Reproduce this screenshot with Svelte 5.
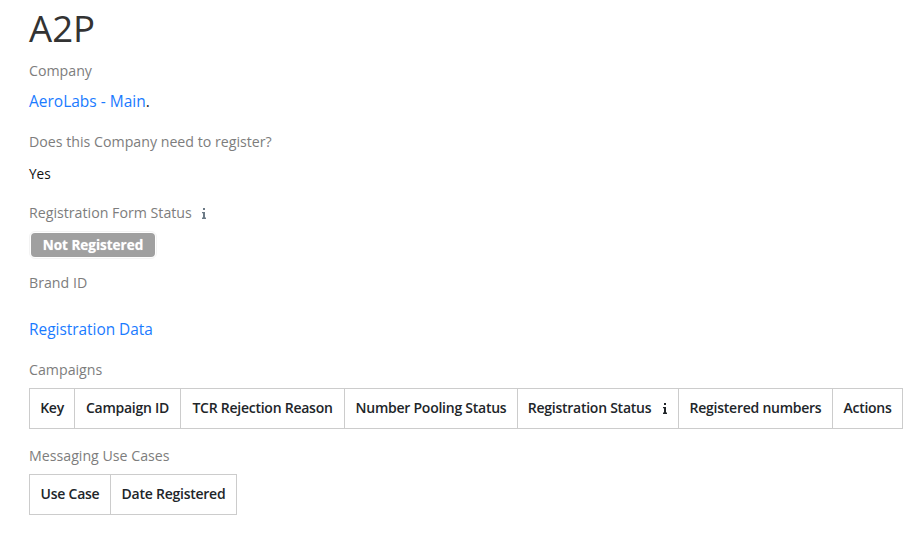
<script>
  const campaignCols = [
    { label: 'Key', width: 45 },
    { label: 'Campaign ID', width: 106 },
    { label: 'TCR Rejection Reason', width: 164 },
    { label: 'Number Pooling Status', width: 173 },
    { label: 'Registration Status', width: 161, info: true },
    { label: 'Registered numbers', width: 154 },
    { label: 'Actions', width: 70 }
  ];
  const useCaseCols = [
    { label: 'Use Case', width: 81 },
    { label: 'Date Registered', width: 126 }
  ];
  const tableWidth = (cols) => cols.reduce((sum, col) => sum + col.width, 0) + 1;
</script>

{#snippet infoIcon()}
  <svg class="info" width="6" height="11" viewBox="0 0 6 11" aria-hidden="true">
    <rect x="2" y="0" width="2" height="2" />
    <path d="M1 4h3v5.6h1V11H1V9.6h1V5.2H1z" />
  </svg>
{/snippet}

{#snippet headerTable(cols)}
  <table style="width: {tableWidth(cols)}px">
    <thead>
      <tr>
        {#each cols as col}
          <th style="width: {col.width}px">
            {col.label}{#if col.info}{@render infoIcon()}{/if}
          </th>
        {/each}
      </tr>
    </thead>
  </table>
{/snippet}

<main class="page">
  <h1>A2P</h1>

  <div class="label l-company">Company</div>
  <div class="value l-main"><a href="#aero">AeroLabs - Main</a>.</div>

  <div class="label l-need">Does this Company need to register?</div>
  <div class="value l-yes">Yes</div>

  <div class="label l-form">Registration Form Status{@render infoIcon()}</div>
  <div class="badge-wrap"><span class="badge-ring"><span class="badge">Not Registered</span></span></div>

  <div class="label l-brand">Brand ID</div>
  <div class="value l-data"><a href="#data">Registration Data</a></div>

  <div class="label l-campaigns">Campaigns</div>
  {@render headerTable(campaignCols)}

  <div class="label l-use">Messaging Use Cases</div>
  {@render headerTable(useCaseCols)}
</main>

<style>
  :global(body) {
    background: #fff;
    color: #212529;
    font-family: "Open Sans", "Noto Sans", sans-serif;
    font-size: 14px;
  }
  .page {
    padding: 0 10px 0 29px;
    height: 535px;
    box-sizing: border-box;
    overflow: hidden;
  }
  h1 {
    margin: 0;
    padding-top: 6px;
    font-size: 36.6px;
    font-weight: 400;
    line-height: 44px;
    color: #333;
  }
  .label { color: #7d7d7d; line-height: 20px; font-size: 14.2px; }
  .value { line-height: 20px; color: #212529; }
  a { color: #1a7bff; text-decoration: none; }
  .l-company { margin-top: 11px; }
  .l-main { margin-top: 10px; font-size: 15.5px; }
  .l-need { margin-top: 21px; }
  .l-yes { margin-top: 12px; color: #111; font-size: 13.6px; }
  .l-form { margin-top: 19px; }
  .badge-wrap {
    margin-top: 8px;
    display: flex;
  }
  .badge-ring {
    display: inline-flex;
    border: 1px solid #f3f3f3;
    border-radius: 6px;
    padding: 1px;
  }
  .badge {
    width: 124px;
    height: 24px;
    border-radius: 4px;
    background: #a0a0a0;
    color: #fff;
    font-size: 13.5px;
    font-weight: 700;
    line-height: 24px;
    text-align: center;
    text-shadow: 0 0 1px rgba(255, 255, 255, 0.6);
  }
  .l-brand { margin-top: 14px; }
  .l-data { margin-top: 27px; font-size: 15.4px; }
  .l-campaigns { margin-top: 20px; }
  .l-use { margin-top: 17px; }
  table {
    margin-top: 8px;
    border-collapse: collapse;
    table-layout: fixed;
  }
  th {
    height: 40px;
    padding: 0 0 2px;
    border: 1px solid #ccc;
    box-sizing: border-box;
    color: #212529;
    font-weight: 600;
    font-size: 14px;
    letter-spacing: -0.25px;
    text-align: center;
    white-space: nowrap;
  }
  .info {
    margin-left: 11px;
    vertical-align: -1px;
    fill: #212529;
  }
  .label .info { margin-left: 9px; fill: #6c7a86; }
</style>
